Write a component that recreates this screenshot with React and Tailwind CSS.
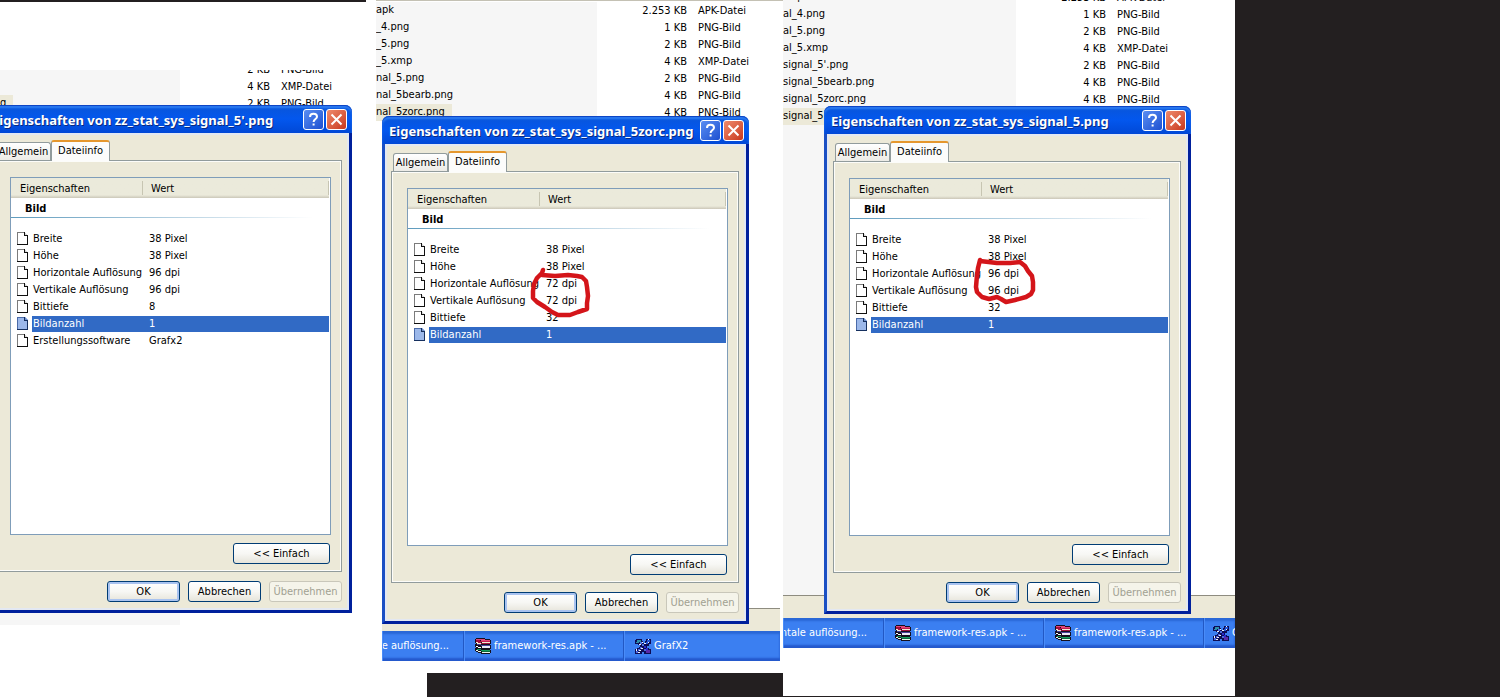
import { clsx } from "clsx";

const commonProps = [
  { name: "Breite", value: "38 Pixel" },
  { name: "Höhe", value: "38 Pixel" },
];

const dialogs = {
  signal5a: {
    title: "Eigenschaften von zz_stat_sys_signal_5'.png",
    rows: [
      ...commonProps,
      { name: "Horizontale Auflösung", value: "96 dpi" },
      { name: "Vertikale Auflösung", value: "96 dpi" },
      { name: "Bittiefe", value: "8" },
      { name: "Bildanzahl", value: "1", selected: true },
      { name: "Erstellungssoftware", value: "Grafx2" },
    ],
  },
  signal5zorc: {
    title: "Eigenschaften von zz_stat_sys_signal_5zorc.png",
    rows: [
      ...commonProps,
      { name: "Horizontale Auflösung", value: "72 dpi" },
      { name: "Vertikale Auflösung", value: "72 dpi" },
      { name: "Bittiefe", value: "32" },
      { name: "Bildanzahl", value: "1", selected: true },
    ],
    marker: "M16 6 L15 9 L10 14 L7 20 L6 27 L6 34 L10 38 L18 43 L25 48 L31 51 L43 51 L51 48 L60 45 L60 39 L61 32 L60 23 L59 17 L55 13 L50 12 L41 11 L28 12 L15 11",
  },
  signal5: {
    title: "Eigenschaften von zz_stat_sys_signal_5.png",
    rows: [
      ...commonProps,
      { name: "Horizontale Auflösung", value: "96 dpi" },
      { name: "Vertikale Auflösung", value: "96 dpi" },
      { name: "Bittiefe", value: "32" },
      { name: "Bildanzahl", value: "1", selected: true },
    ],
    marker: "M11 6 L9 14 L8 21 L7 33 L8 38 L13 43 L20 45 L28 43 L32 45 L37 48 L46 46 L57 43 L62 40 L64 36 L64 28 L63 22 L59 17 L56 12 L51 8 L41 9 L28 9 L11 7",
  },
};

const filesA = [
  { name: "", size: "2 KB", type: "PNG-Bild" },
  { name: "", size: "4 KB", type: "XMP-Datei" },
  { name: "g", size: "2 KB", type: "PNG-Bild", selected: true },
];

const filesB = [
  { name: "apk", size: "2.253 KB", type: "APK-Datei" },
  { name: "_4.png", size: "1 KB", type: "PNG-Bild" },
  { name: "_5.png", size: "2 KB", type: "PNG-Bild" },
  { name: "_5.xmp", size: "4 KB", type: "XMP-Datei" },
  { name: "nal_5.png", size: "2 KB", type: "PNG-Bild" },
  { name: "nal_5bearb.png", size: "4 KB", type: "PNG-Bild" },
  { name: "nal_5zorc.png", size: "4 KB", type: "PNG-Bild", selected: true },
];

const filesC = [
  { name: "s.apk", size: "2.253 KB", type: "APK-Datei" },
  { name: "al_4.png", size: "1 KB", type: "PNG-Bild" },
  { name: "al_5.png", size: "2 KB", type: "PNG-Bild" },
  { name: "al_5.xmp", size: "4 KB", type: "XMP-Datei" },
  { name: "signal_5'.png", size: "2 KB", type: "PNG-Bild" },
  { name: "signal_5bearb.png", size: "4 KB", type: "PNG-Bild" },
  { name: "signal_5zorc.png", size: "4 KB", type: "PNG-Bild" },
  { name: "signal_5.", size: "", type: "", selected: true },
];

function PageIcon({ selected }) {
  return (
    <svg className="h-[13px] w-[11px] shrink-0" viewBox="0 0 11 13" shapeRendering="crispEdges" aria-hidden="true">
      <path d="M0 0h8l3 3v10H0z" fill={selected ? "#9cb8ea" : "#fff"} />
      <path d="M0 0h8v1H1v12H0z" fill={selected ? "#4a6aa8" : "#7b7b7b"} />
      <path d="M7 0h1v1h1v1h1v1h1v10H0v-1h10V4H7z" fill={selected ? "#16305f" : "#101010"} />
      <path d="M8 1v2h2z" fill={selected ? "#6f8fcb" : "#d8d8d8"} />
    </svg>
  );
}

// WinRAR book stack
function RarIcon() {
  return (
    <svg className="size-4 shrink-0" viewBox="0 0 16 16" shapeRendering="crispEdges" aria-hidden="true">
      <path d="M1 0h9v1h5v1h1v4h-1v1h1v4h-1v1h1v3h-1v1H6v-1H3v-1H1v-1H0v-3h1V9H0V6h1V5H0V1h1z" fill="#15101c" />
      <path d="M1 1h9v1h5v1H6V2H1z" fill="#e0457a" />
      <path d="M1 2h4v1h1v2h9v1H6V5H3V4H1z" fill="#a3123f" />
      <path d="M6 3h9v1H6z" fill="#c41c50" />
      <path d="M7 4h8v1H7z" fill="#f4e9d0" />
      <path d="M1 4h2v1h3v1H2V5H1z" fill="#f4e9d0" />
      <path d="M2 6h4v1h9v1H6V7H2z" fill="#4a3f9a" />
      <path d="M7 8h8v2H7z" fill="#ece9f6" />
      <path d="M1 8h2v1h3v1H3V9H1z" fill="#fff" />
      <path d="M2 11h4v1h9v1H6v-1H2z" fill="#12a05c" />
      <path d="M7 13h8v1H7z" fill="#0c6b3c" />
      <path d="M7 14h8v1H7z" fill="#eaf6ee" />
      <path d="M1 12h2v1h3v1H3v-1H1z" fill="#eaf6ee" />
    </svg>
  );
}

// GrafX2 crossed brushes
function GrafxIcon() {
  return (
    <svg className="size-4 shrink-0" viewBox="0 0 16 16" shapeRendering="crispEdges" aria-hidden="true">
      <path d="M1 1h6v2h1v2h2V3h1V1h5v5h-2v2h-2v2h2v1h2v5H9v-2H7v2H0v-5h2v-1h2V9h1V7H3V6H0V2h1z" fill="#0d0d55" />
      <path d="M2 2h4v2H2zM1 4h3v1H1z" fill="#2c8fa8" />
      <path d="M5 4h2v2H5zM7 6h2v2H7z" fill="#4f74e8" />
      <path d="M9 8h2v2H9zM11 10h2v2h-2z" fill="#2a2ad2" />
      <path d="M11 12h4v3h-4z" fill="#5a2aa8" />
      <path d="M12 2h3v2h-3zM11 4h2v2h-2z" fill="#2456d8" />
      <path d="M5 9h2v2H5zM3 11h2v2H3zM1 13h2v2H1zM9 11h2v2H9z" fill="#4c66e0" />
      <path d="M7 4h1v1H7zM9 5h2v1H9zM4 6h2v1H4zM13 1h1v1h-1zM1 11h1v2H1zM4 12h2v1H4zM3 14h2v1H3zM6 10h2v1H6zM13 4h1v1h-1z" fill="#eef3ff" />
    </svg>
  );
}

function FileList({ files, nameWidth, shift, fill }) {
  return (
    <div className="absolute inset-0 flex flex-col overflow-hidden">
      <table className={clsx("w-full table-fixed border-collapse", shift)}>
        <colgroup>
          <col className={nameWidth} />
          <col className="w-[90px]" />
          <col />
        </colgroup>
        <tbody>
          {files.map((file, i) => (
            <tr key={i} className="h-[17px]">
              <td className="overflow-hidden bg-[#f6f6f6] p-0">
                <span className={clsx("inline-block h-[17px] pr-[7px] align-top", file.selected && "bg-[#ece9d8]")}>
                  {file.name}
                </span>
              </td>
              <td className="p-0 text-right">{file.size}</td>
              <td className="py-0 pr-0 pl-[11px]">{file.type}</td>
            </tr>
          ))}
        </tbody>
      </table>
      {fill && <div className={clsx("flex-1 bg-[#f6f6f6]", nameWidth)} />}
    </div>
  );
}

function XpButton({ children, className, primary, disabled }) {
  return (
    <button
      type="button"
      disabled={disabled}
      className={clsx(
        "h-[21px] rounded-[3px] border text-center leading-[18px]",
        className,
        disabled
          ? "border-[#c9c7ba] bg-[#f5f4ea] text-[#a1a192]"
          : "border-[#003c74] bg-linear-to-b from-white via-[#f7f7f4] to-[#e6e4da] text-black",
        primary && "shadow-[inset_0_0_0_2px_#a9c3f0]"
      )}
    >
      {children}
    </button>
  );
}

function TitleBar({ title }) {
  return (
    <div className="flex h-7 items-center gap-[2px] rounded-t-[7px] bg-linear-to-b from-[#0a55d8] via-[#0357ee] to-[#0148d6] pt-px pr-[5px] pl-[7px] shadow-[inset_0_1px_1px_#0a3fc0,inset_0_3px_2px_#2f80f5]">
      <h2 className="flex-1 font-['Noto_Sans',sans-serif] text-[13px] leading-4 font-bold whitespace-nowrap text-white [text-shadow:1px_1px_#0a2a80]">
        {title}
      </h2>
      <button
        type="button"
        aria-label="Hilfe"
        className="flex size-[21px] items-center justify-center rounded-[3px] border border-white bg-linear-to-br from-[#5a8df2] to-[#1e4fd0]"
      >
        <svg className="size-[15px]" viewBox="0 0 15 15" fill="none" stroke="#fff" strokeWidth="2" aria-hidden="true">
          <path d="M4 5C4 2.600 5.500 1.800 7.500 1.800S11 2.900 11 4.700C11 7 7.600 7 7.600 10" />
          <path d="M7.600 11.500v2" />
        </svg>
      </button>
      <button
        type="button"
        aria-label="Schließen"
        className="flex size-[21px] items-center justify-center rounded-[3px] border border-white bg-linear-to-br from-[#ee8a6c] to-[#c8351a]"
      >
        <svg className="size-[15px]" viewBox="0 0 15 15" stroke="#fff" strokeWidth="2" aria-hidden="true">
          <path d="M2.500 2.500l10 10M12.500 2.500l-10 10" />
        </svg>
      </button>
    </div>
  );
}

function PropertyTable({ rows }) {
  return (
    <div className="h-[358px] border border-[#7f9db9] bg-white pr-px">
      <table className="w-full table-fixed border-collapse text-left">
        <colgroup>
          <col className="w-[131px]" />
          <col />
        </colgroup>
        <thead>
          <tr className="h-5 bg-linear-to-b from-[#ebeadb] from-85% to-[#cbc7b8]">
            <th className="pt-[2px] pr-0 pb-0 pl-[9px] font-normal">Eigenschaften</th>
            <th className="p-0 font-normal">
              <div className="h-[14px] border-x border-x-[#c7c5b2] pl-2">Wert</div>
            </th>
          </tr>
        </thead>
        <tbody>
          <tr>
            <th colSpan={2} className="p-0">
              <div className="h-[19px] pt-px pl-[14px] leading-5">Bild</div>
              <div className="mb-3 h-px bg-linear-to-r from-[#5e9bbd] to-white to-95%" />
            </th>
          </tr>
          {rows.map((row) => (
            <tr key={row.name} className={clsx("h-[17px]", row.selected && "text-white")}>
              <td className="p-0">
                <div className="flex items-center gap-1 pl-[6px] whitespace-nowrap">
                  <PageIcon selected={row.selected} />
                  <span className={clsx("h-4 flex-1 pl-px", row.selected && "bg-[#316ac5]")}>{row.name}</span>
                </div>
              </td>
              <td className="p-0">
                <div className={clsx("h-4 pl-[7px]", row.selected && "bg-[#316ac5]")}>{row.value}</div>
              </td>
            </tr>
          ))}
        </tbody>
      </table>
    </div>
  );
}

function PropertiesDialog({ title, rows, marker, position }) {
  return (
    <section className={clsx("absolute w-[367px]", position)}>
      <TitleBar title={title} />
      <div className="border-x-[3px] border-b-[3px] border-l-[#1a4fc4] border-r-[#00209c] border-b-[#00209c] bg-[#ece9d8] pr-[7px] pb-2 pl-[6px] shadow-[inset_0_0_0_2px_#e3e8f2]">
        <div role="tablist" className="flex items-end pt-[7px] pl-[2px]">
          <button
            type="button"
            role="tab"
            aria-selected="false"
            className="h-[18px] w-[55px] rounded-t-[3px] border border-b-0 border-[#919b9c] bg-linear-to-b from-white to-[#ecebe6] pt-px text-center"
          >
            Allgemein
          </button>
          <button
            type="button"
            role="tab"
            aria-selected="true"
            className="relative -mb-px h-[21px] w-[59px] rounded-t-[3px] border-x border-t-2 border-x-[#919b9c] border-t-[#e5972d] bg-[#fcfcfb] pb-[2px] text-center"
          >
            Dateiinfo
          </button>
        </div>
        <div className="border border-[#919b9c] pt-4 pr-[10px] pb-[7px] pl-[15px] shadow-[inset_0_0_0_1px_#fcfcf9]">
          <PropertyTable rows={rows} />
          <div className="mt-2 flex justify-end pr-px">
            <XpButton className="w-[97px]">&lt;&lt; Einfach</XpButton>
          </div>
        </div>
        <div className="mt-[9px] flex justify-end gap-2">
          <XpButton className="w-[73px]" primary>OK</XpButton>
          <XpButton className="w-[73px]">Abbrechen</XpButton>
          <XpButton className="w-[73px]" disabled>Übernehmen</XpButton>
        </div>
      </div>
      {marker && (
        <svg className="pointer-events-none absolute top-[148px] left-[145px] h-[60px] w-[70px]" viewBox="0 0 70 60" aria-hidden="true">
          <path d={marker} fill="none" stroke="#d4151a" strokeWidth="4.500" strokeLinejoin="round" strokeLinecap="round" />
        </svg>
      )}
    </section>
  );
}

function StatusBar() {
  return <div className="h-[23px] border-t border-[#8e8c80] bg-[#ece9d8]" />;
}

function TaskButton({ children, icon: Icon, className }) {
  return (
    <button
      type="button"
      className={clsx(
        "flex h-[30px] shrink-0 items-center gap-[3px] overflow-hidden border-r border-l border-r-[#2258c4] border-l-[#4a8cf8] whitespace-nowrap text-white",
        className
      )}
    >
      {Icon && <Icon />}
      {children}
    </button>
  );
}

function Taskbar({ children }) {
  return (
    <div className="flex h-[30px] overflow-hidden bg-[#3b7ff1] shadow-[inset_0_3px_2px_#2a68d6,inset_0_-3px_2px_#2459cc]">
      {children}
    </div>
  );
}

export default function App() {
  return (
    <div className="flex min-h-screen bg-[#231f20] font-['DejaVu_Sans_Condensed','DejaVu_Sans',sans-serif] text-[11px] leading-4 text-black">
      <div className="flex w-[376px] shrink-0 flex-col bg-white pb-[72px]">
        <div className="h-[2px] w-[366px] bg-[#231f20]" />
        <div className="relative mt-[68px] flex-1">
          <FileList files={filesA} nameWidth="w-[180px]" shift="-mt-[9px]" fill />
          <PropertiesDialog {...dialogs.signal5a} position="top-[35px] -left-[15px]" />
        </div>
      </div>

      <div className="flex w-[407px] shrink-0 flex-col bg-white">
        <div className="relative flex-1 border-t border-[#c4c1b4]">
          <FileList files={filesB} nameWidth="w-[221px]" shift="mt-px" />
          <PropertiesDialog {...dialogs.signal5zorc} position="top-[115px] left-[6px]" />
        </div>
        <div className="mr-[3px] mb-3 ml-[6px]">
          <StatusBar />
          <Taskbar>
            <TaskButton className="w-[82px] justify-end pr-[14px]">e auflösung...</TaskButton>
            <TaskButton icon={RarIcon} className="w-40 pl-[10px]">framework-res.apk - ...</TaskButton>
            <TaskButton icon={GrafxIcon} className="w-40 pl-[10px]">GrafX2</TaskButton>
          </Taskbar>
        </div>
        <div className="ml-[51px] h-6 bg-[#231f20]" />
      </div>

      <div className="mb-px flex w-[452px] shrink-0 flex-col bg-white pb-12">
        <div className="relative flex-1">
          <FileList files={filesC} nameWidth="w-[233px]" shift="-mt-[11px]" fill />
          <PropertiesDialog {...dialogs.signal5} position="top-[106px] left-[41px]" />
        </div>
        <StatusBar />
        <Taskbar>
          <TaskButton className="w-[101px] justify-end pr-4">ntale auflösung...</TaskButton>
          <TaskButton icon={RarIcon} className="w-40 pl-[10px]">framework-res.apk - ...</TaskButton>
          <TaskButton icon={RarIcon} className="w-40 pl-[10px]">framework-res.apk - ...</TaskButton>
          <TaskButton icon={GrafxIcon} className="w-8 pl-[8px]">GrafX2</TaskButton>
        </Taskbar>
      </div>
    </div>
  );
}
